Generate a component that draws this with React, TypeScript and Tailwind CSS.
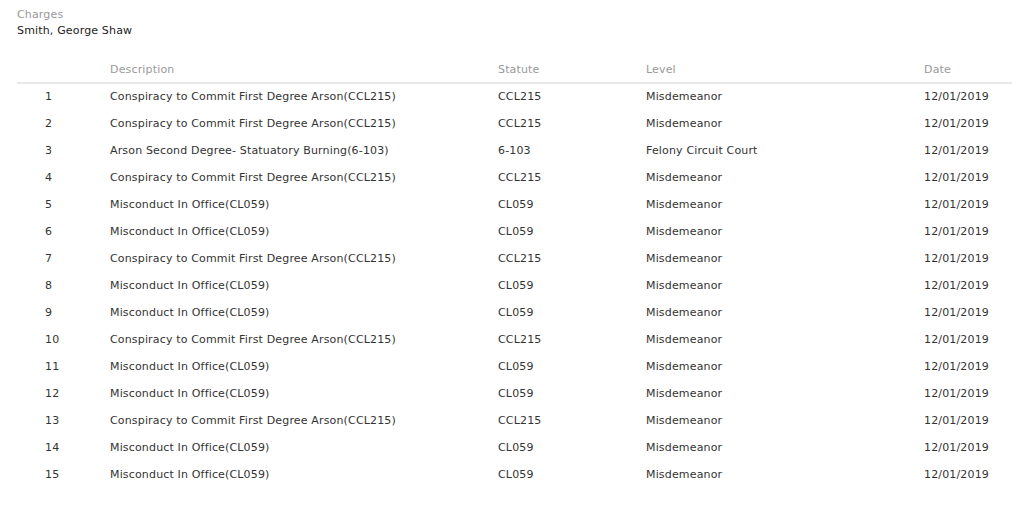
const rows: [string, string, string][] = [
  ['Conspiracy to Commit First Degree Arson(CCL215)', 'CCL215', 'Misdemeanor'],
  ['Conspiracy to Commit First Degree Arson(CCL215)', 'CCL215', 'Misdemeanor'],
  ['Arson Second Degree- Statuatory Burning(6-103)', '6-103', 'Felony Circuit Court'],
  ['Conspiracy to Commit First Degree Arson(CCL215)', 'CCL215', 'Misdemeanor'],
  ['Misconduct In Office(CL059)', 'CL059', 'Misdemeanor'],
  ['Misconduct In Office(CL059)', 'CL059', 'Misdemeanor'],
  ['Conspiracy to Commit First Degree Arson(CCL215)', 'CCL215', 'Misdemeanor'],
  ['Misconduct In Office(CL059)', 'CL059', 'Misdemeanor'],
  ['Misconduct In Office(CL059)', 'CL059', 'Misdemeanor'],
  ['Conspiracy to Commit First Degree Arson(CCL215)', 'CCL215', 'Misdemeanor'],
  ['Misconduct In Office(CL059)', 'CL059', 'Misdemeanor'],
  ['Misconduct In Office(CL059)', 'CL059', 'Misdemeanor'],
  ['Conspiracy to Commit First Degree Arson(CCL215)', 'CCL215', 'Misdemeanor'],
  ['Misconduct In Office(CL059)', 'CL059', 'Misdemeanor'],
  ['Misconduct In Office(CL059)', 'CL059', 'Misdemeanor'],
];

export default function App() {
  return (
    <div className="min-h-screen bg-white pl-[17px] pt-[7px] font-['DejaVu_Sans',Verdana,sans-serif] text-[11px] leading-4 tracking-[0.16px] text-[#333]">
      <p className="text-[#999]">Charges</p>
      <p className="text-[#222]">Smith, George Shaw</p>

      <table className="mt-[23px] w-[995px] table-fixed border-collapse">
        <colgroup>
          <col className="w-[93px]" />
          <col className="w-[388px]" />
          <col className="w-[148px]" />
          <col className="w-[278px]" />
          <col className="w-[88px]" />
        </colgroup>
        <thead>
          <tr className="border-b-2 border-[#e8e8e8] text-left font-normal text-[#999]">
            <th className="pb-[4px] font-normal"></th>
            <th className="pb-[4px] font-normal">Description</th>
            <th className="pb-[4px] font-normal">Statute</th>
            <th className="pb-[4px] font-normal">Level</th>
            <th className="pb-[4px] font-normal">Date</th>
          </tr>
        </thead>
        <tbody>
          {rows.map(([desc, statute, level], i) => (
            <tr key={i} className="h-[27px]">
              <td className="pl-[28px]">{i + 1}</td>
              <td>{desc}</td>
              <td>{statute}</td>
              <td>{level}</td>
              <td>12/01/2019</td>
            </tr>
          ))}
        </tbody>
      </table>
    </div>
  );
}
